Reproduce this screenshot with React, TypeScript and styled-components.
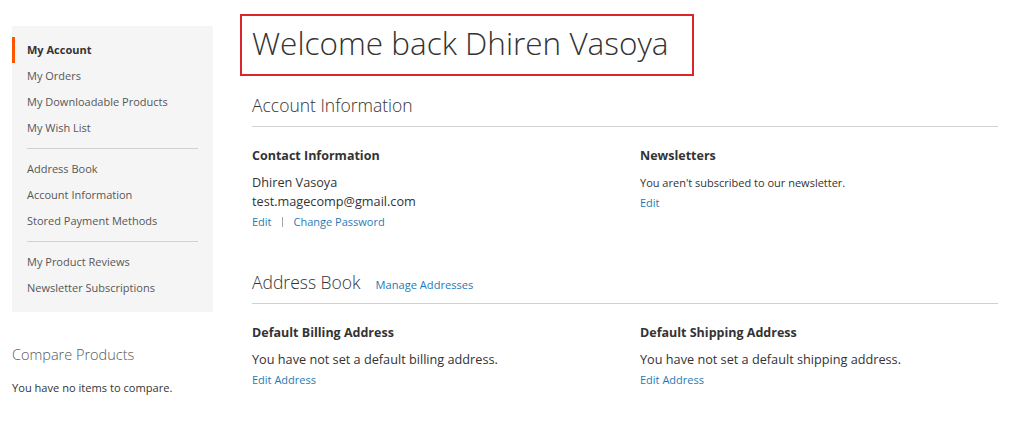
import React from "react";
import styled, { createGlobalStyle } from "styled-components";

const Global = createGlobalStyle`
  html, body { margin: 0; padding: 0; background: #fff; }
  body { font-family: "Open Sans", "Noto Sans", sans-serif; color: #333; }
  * { box-sizing: border-box; }
`;

const Page = styled.div`
  display: flex;
  align-items: flex-start;
  width: 1024px;
  height: 426px;
  padding: 14px 26px 0 12px;
  overflow: hidden;
`;

const Sidebar = styled.aside`
  width: 201px;
  flex: none;
  padding-top: 12px;
`;

const Nav = styled.nav`
  background: #f5f5f5;
  padding: 11px 0;
`;

const NavItem = styled.div<{ $active?: boolean }>`
  height: 26px;
  line-height: 26px;
  padding-left: 12px;
  font-size: 11px;
  color: ${(p) => (p.$active ? "#333" : "#575757")};
  font-weight: ${(p) => (p.$active ? 700 : 400)};
  border-left: 3px solid ${(p) => (p.$active ? "#ff5501" : "transparent")};
  white-space: nowrap;
`;

const NavDivider = styled.div`
  height: 1px;
  background: #d1d1d1;
  margin: 7px 15px 7px 15px;
`;

const CompareTitle = styled.div`
  margin-top: 33px;
  font-size: 14.5px;
  font-weight: 300;
  line-height: 20px;
  color: #575757;
`;

const CompareText = styled.div`
  margin-top: 15px;
  font-size: 11.1px;
  line-height: 16px;
  color: #333;
`;

const Main = styled.main`
  flex: 1;
  margin-left: 39px;
`;

const TitleBox = styled.div`
  display: inline-block;
  margin-left: -12px;
  width: 454px;
  height: 62px;
  border: 2px solid #d8262c;
  padding-left: 10px;
`;

const Title = styled.h1`
  margin: 0;
  font-size: 31.5px;
  font-weight: 300;
  line-height: 54px;
  color: #333;
  white-space: nowrap;
`;

const Block = styled.section<{ $top: number }>`
  margin-top: ${(p) => p.$top}px;
`;

const BlockTitle = styled.div`
  display: flex;
  align-items: baseline;
  gap: 15px;
  border-bottom: 1px solid #d1d1d1;
  padding-bottom: 8px;
`;

const BlockHeading = styled.h2`
  margin: 0;
  font-size: 17.5px;
  font-weight: 300;
  line-height: 26px;
  color: #333;
`;

const HeadingLink = styled.a`
  font-size: 11.1px;
  color: #1f7ab8;
  text-decoration: none;
`;

const Columns = styled.div`
  display: grid;
  grid-template-columns: 388px 1fr;
  padding-top: 19px;
`;

const Box = styled.div``;

const BoxTitle = styled.div`
  font-size: 12.5px;
  font-weight: 700;
  line-height: 20px;
  color: #333;
  margin-bottom: 7px;
`;

const BoxText = styled.div<{ $small?: boolean }>`
  font-size: ${(p) => (p.$small ? "11px" : "12.7px")};
  line-height: 19px;
  color: #333;
`;

const Actions = styled.div`
  display: flex;
  align-items: center;
  margin-top: 1px;
  font-size: 11px;
  line-height: 19px;
`;

const Link = styled.a`
  color: #1f7ab8;
  text-decoration: none;
`;

const Sep = styled.span`
  display: inline-block;
  width: 1px;
  height: 10px;
  background: #a6a6a6;
  margin: 0 11px 0 10px;
`;

export default function App() {
  return (
    <>
      <Global />
      <Page>
        <Sidebar>
          <Nav>
            <NavItem $active>My Account</NavItem>
            <NavItem>My Orders</NavItem>
            <NavItem>My Downloadable Products</NavItem>
            <NavItem>My Wish List</NavItem>
            <NavDivider />
            <NavItem>Address Book</NavItem>
            <NavItem>Account Information</NavItem>
            <NavItem>Stored Payment Methods</NavItem>
            <NavDivider />
            <NavItem>My Product Reviews</NavItem>
            <NavItem>Newsletter Subscriptions</NavItem>
          </Nav>
          <CompareTitle>Compare Products</CompareTitle>
          <CompareText>You have no items to compare.</CompareText>
        </Sidebar>
        <Main>
          <TitleBox>
            <Title>Welcome back Dhiren Vasoya</Title>
          </TitleBox>
          <Block $top={16}>
            <BlockTitle>
              <BlockHeading>Account Information</BlockHeading>
            </BlockTitle>
            <Columns>
              <Box>
                <BoxTitle>Contact Information</BoxTitle>
                <BoxText>Dhiren Vasoya</BoxText>
                <BoxText>test.magecomp@gmail.com</BoxText>
                <Actions>
                  <Link href="#">Edit</Link>
                  <Sep />
                  <Link href="#">Change Password</Link>
                </Actions>
              </Box>
              <Box>
                <BoxTitle>Newsletters</BoxTitle>
                <BoxText $small>You aren't subscribed to our newsletter.</BoxText>
                <Actions>
                  <Link href="#">Edit</Link>
                </Actions>
              </Box>
            </Columns>
          </Block>
          <Block $top={38}>
            <BlockTitle>
              <BlockHeading>Address Book</BlockHeading>
              <HeadingLink href="#">Manage Addresses</HeadingLink>
            </BlockTitle>
            <Columns>
              <Box>
                <BoxTitle>Default Billing Address</BoxTitle>
                <BoxText>You have not set a default billing address.</BoxText>
                <Actions>
                  <Link href="#">Edit Address</Link>
                </Actions>
              </Box>
              <Box>
                <BoxTitle>Default Shipping Address</BoxTitle>
                <BoxText>You have not set a default shipping address.</BoxText>
                <Actions>
                  <Link href="#">Edit Address</Link>
                </Actions>
              </Box>
            </Columns>
          </Block>
        </Main>
      </Page>
    </>
  );
}
